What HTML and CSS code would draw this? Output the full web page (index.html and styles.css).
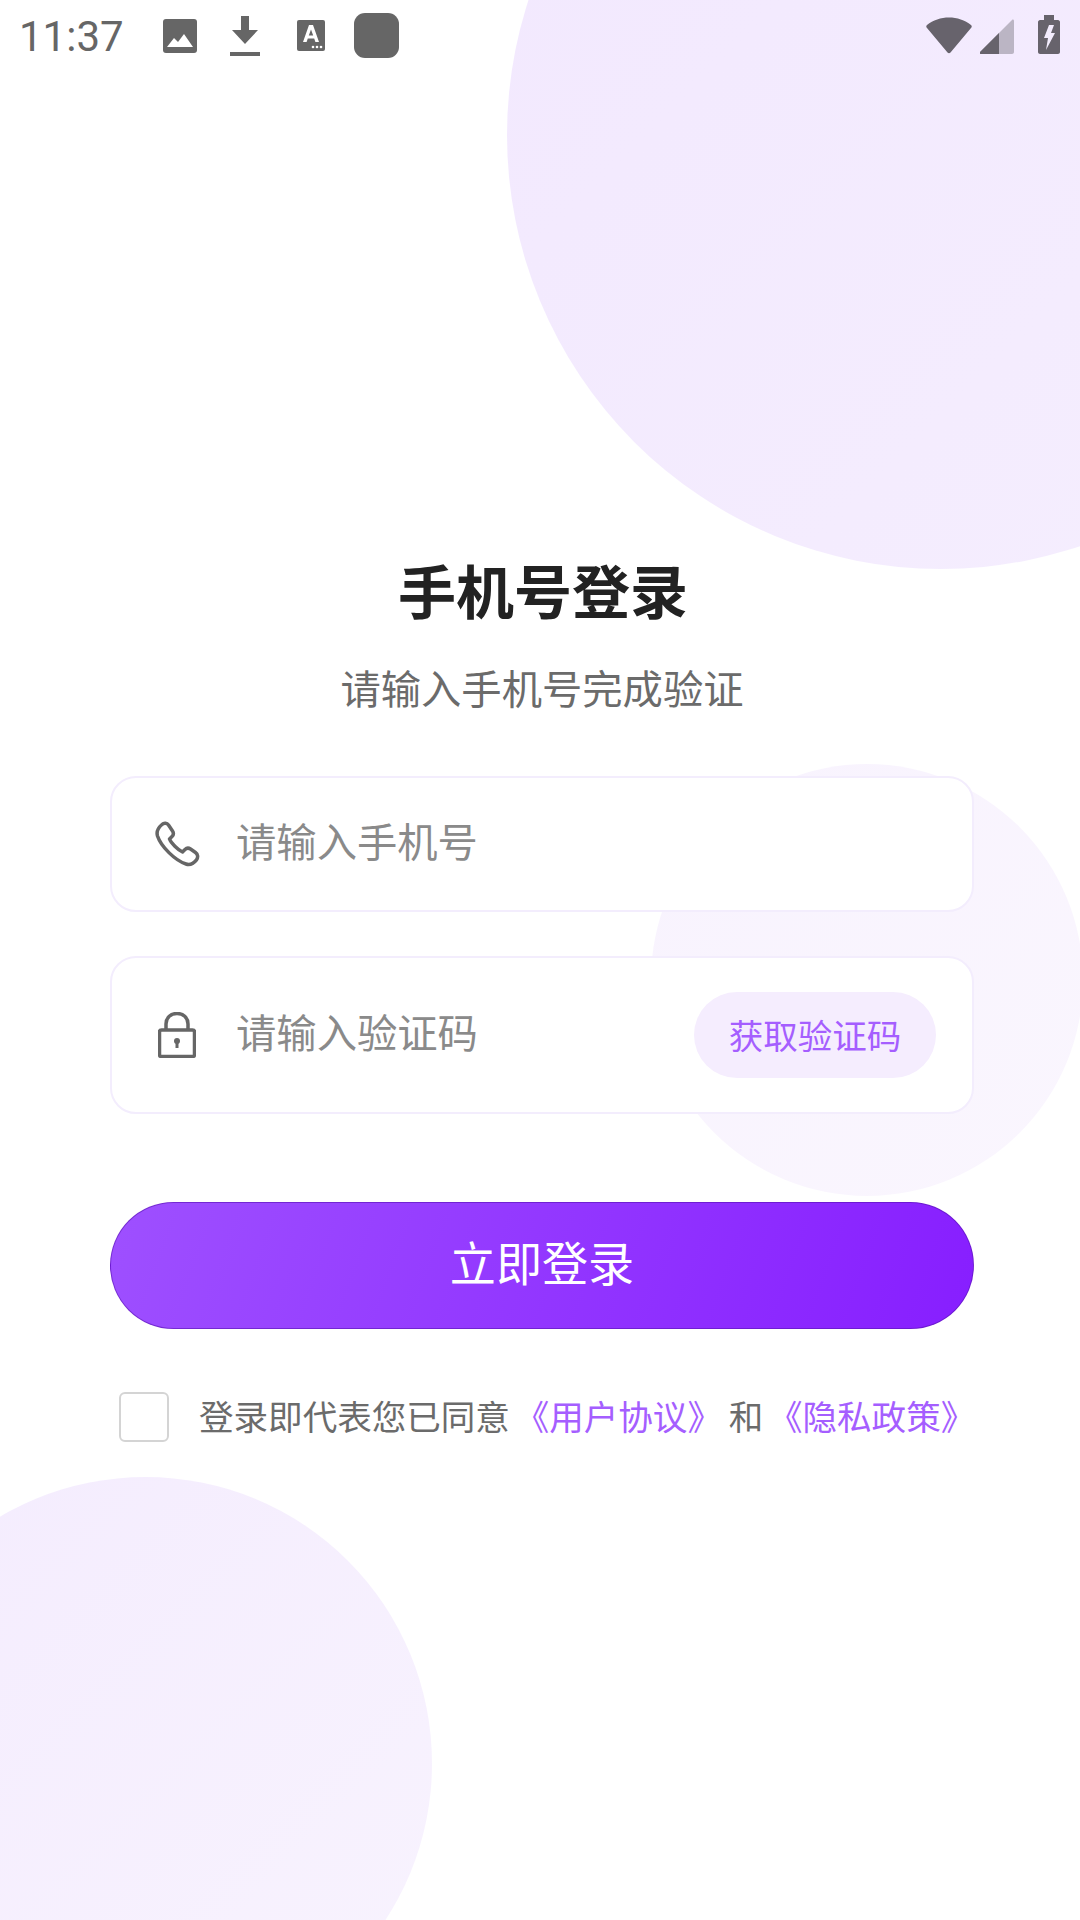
FILE: index.html
```html
<!DOCTYPE html>
<html lang="zh-CN">
<head>
    <meta charset="UTF-8">
    <title>手机号登录</title>
    <link rel="stylesheet" href="styles.css">
</head>
<body>
    <div class="screen">
        <div class="circle circle-top"></div>
        <div class="circle circle-middle"></div>
        <div class="circle circle-bottom"></div>

        <div class="status-bar">
            <div class="status-left">
                <span class="time">11:37</span>
                <svg class="icon-image" viewBox="0 0 34 34"><rect width="34" height="34" rx="3" fill="#666"/><path d="M4 28 L11 19 L15 23 L21 15 L30 28 Z" fill="#fff"/></svg>
                <svg class="icon-download" viewBox="0 0 30 40"><path d="M11 0 H19 V14 H28 L15 28 L2 14 H11 Z" fill="#666"/><rect y="36" width="30" height="4" fill="#666"/></svg>
                <svg class="icon-font" viewBox="0 0 28 32"><rect width="28" height="31" rx="2" fill="#666"/><path d="M12 5 H16 L22 22 H18.400 L17.200 18.600 H10.800 L9.600 22 H6 Z M14 9.400 L11.800 15.600 H16.200 Z" fill="#fff" fill-rule="evenodd"/><circle cx="16" cy="27" r="1.300" fill="#fff"/><circle cx="20" cy="27" r="1.300" fill="#fff"/><circle cx="24" cy="27" r="1.300" fill="#fff"/></svg>
                <div class="app-square"></div>
            </div>
            <div class="status-right">
                <svg class="icon-wifi" viewBox="0 0 46 37"><path d="M1 8 C13 -2 33 -2 45 8 C46 9 46 10 45 11 L24.500 35.500 C23.600 36.600 22.400 36.600 21.500 35.500 L1 11 C0 10 0 9 1 8 Z" fill="#67636c"/></svg>
                <svg class="icon-signal" viewBox="0 0 34 35"><path d="M0 33 L32 1 C33 0 34 1 34 2 V33 C34 34 33 35 32 35 H1 C0 35 -1 34 0 33 Z" fill="#bbb5c4"/><path d="M0 33 L19 14 V35 H1 C0 35 -1 34 0 33 Z" fill="#67636c"/></svg>
                <svg class="icon-battery" viewBox="0 0 22 39"><path d="M6 0 H16 V5 H20 C21 5 22 6 22 7 V37 C22 38 21 39 20 39 H2 C1 39 0 38 0 37 V7 C0 6 1 5 2 5 H6 Z" fill="#67636c"/><path d="M11 10 H16 L13 18 H17 L8 35 L10 23 H6 Z" fill="#f3ecfd"/></svg>
            </div>
        </div>

        <div class="content">
            <h1 class="title">手机号登录</h1>
            <p class="subtitle">请输入手机号完成验证</p>

            <div class="field field-phone">
                <svg class="field-icon" viewBox="0 0 46 46"><path d="M8 3.500 C10 1.500 13 2 14.500 4 L18.500 10 C19.800 12 19.500 14 18 15.500 L15.500 18 C17 22 24 29 28.500 31 L31 28.500 C32.500 27 34.500 26.700 36.500 28 L41.500 31.500 C44 33.200 44.300 36.500 42.500 38.800 C39.500 42.500 36 44.500 32 43 C21 39.500 7 25.500 3.500 15 C2 10 4.500 6.500 8 3.500 Z" fill="none" stroke="#666" stroke-width="3.500" stroke-linejoin="round"/></svg>
                <span class="placeholder">请输入手机号</span>
            </div>

            <div class="field field-code">
                <svg class="field-icon field-icon-lock" viewBox="0 0 38 46"><path d="M8 19 V12 C8 5.500 13 1.500 19 1.500 C25 1.500 30 5.500 30 12 V19" fill="none" stroke="#666" stroke-width="3.500"/><rect x="1.500" y="18" width="35" height="26.500" rx="2" fill="none" stroke="#666" stroke-width="3.500"/><circle cx="19" cy="29" r="3" fill="#666"/><rect x="17.500" y="29" width="3" height="7" fill="#666"/></svg>
                <span class="placeholder">请输入验证码</span>
                <div class="code-btn">获取验证码</div>
            </div>

            <div class="login-btn">立即登录</div>

            <div class="agreement">
                <div class="checkbox"></div>
                <div class="agreement-text">登录即代表您已同意 <a class="link">《用户协议》</a> 和 <a class="link">《隐私政策》</a></div>
            </div>
        </div>
    </div>
</body>
</html>
```

FILE: styles.css
```css
* {
    box-sizing: border-box;
}

body {
    margin: 0;
    background-color: #fff;
    font-family: "Noto Sans CJK SC", "Noto Sans", sans-serif;
}

.screen {
    position: relative;
    width: 1080px;
    height: 1920px;
    overflow: hidden;
    background-color: #fff;
}

.circle {
    position: absolute;
    border-radius: 50%;
}

.circle-top {
    left: 507px;
    top: -299px;
    width: 868px;
    height: 868px;
    background: linear-gradient(135deg, #f2e8fe, #f5eefe);
}

.circle-middle {
    left: 651px;
    top: 764px;
    width: 432px;
    height: 432px;
    background: linear-gradient(135deg, #f8f3fe, #faf6fe);
}

.circle-bottom {
    left: -141px;
    top: 1477px;
    width: 573px;
    height: 573px;
    background: linear-gradient(135deg, #f4ecfe, #f8f3fe);
}

.status-bar {
    position: relative;
    display: flex;
    justify-content: space-between;
    align-items: center;
    height: 70px;
    padding: 2px 20px 0 19px;
}

.status-left {
    display: flex;
    align-items: center;
}

.status-right {
    display: flex;
    align-items: flex-end;
    padding-bottom: 4px;
}

.time {
    width: 144px;
    padding-top: 1px;
    font-family: Roboto, sans-serif;
    font-size: 42px;
    color: #666;
}

.icon-image {
    width: 34px;
    height: 34px;
}

.icon-download {
    width: 30px;
    height: 40px;
    margin-left: 33px;
}

.icon-font {
    width: 28px;
    height: 32px;
    margin-left: 37px;
}

.app-square {
    width: 45px;
    height: 45px;
    margin-left: 29px;
    margin-bottom: 2px;
    border-radius: 11px;
    background-color: #666;
}

.icon-wifi {
    width: 46px;
    height: 37px;
}

.icon-signal {
    width: 34px;
    height: 35px;
    margin-left: 8px;
}

.icon-battery {
    width: 22px;
    height: 39px;
    margin-left: 24px;
}

.content {
    position: relative;
    display: flex;
    flex-direction: column;
    padding: 0 106px 0 110px;
}

.title {
    margin: 478px 0 0;
    padding-left: 2px;
    font-size: 58px;
    line-height: 82px;
    font-weight: 700;
    text-align: center;
    color: #222;
}

.subtitle {
    margin: 28px 0 0;
    font-size: 40.32px;
    line-height: 58px;
    text-align: center;
    color: #6b6b6b;
}

.field {
    display: flex;
    align-items: center;
    padding: 0 36px 0 42px;
    border: 2px solid #f3edfd;
    border-radius: 26px;
    background-color: #fff;
}

.field-phone {
    height: 136px;
    margin-top: 60px;
}

.field-code {
    height: 158px;
    margin-top: 44px;
}

.field-icon {
    width: 46px;
    height: 46px;
    flex-shrink: 0;
}

.field-icon-lock {
    width: 38px;
    margin-left: 4px;
    margin-right: 4px;
}

.placeholder {
    flex: 1;
    margin-left: 36px;
    padding-bottom: 9px;
    font-size: 40.32px;
    color: #8a8a8a;
}

.code-btn {
    display: flex;
    justify-content: center;
    align-items: center;
    width: 242px;
    height: 86px;
    padding-bottom: 2px;
    border-radius: 43px;
    background-color: #f5edfe;
    font-size: 34.56px;
    color: #a55eff;
}

.login-btn {
    display: flex;
    justify-content: center;
    align-items: center;
    height: 127px;
    margin-top: 88px;
    padding-bottom: 9px;
    border: 1px solid rgba(90, 20, 180, 0.6);
    border-radius: 64px;
    background: linear-gradient(110deg, #9e50ff, #871eff);
    font-size: 46.08px;
    color: #fff;
}

.agreement {
    display: flex;
    align-items: center;
    margin-top: 61px;
    padding-left: 9px;
}

.checkbox {
    width: 50px;
    height: 50px;
    border: 2px solid #d4d4d4;
    border-radius: 6px;
    background-color: #fff;
    flex-shrink: 0;
}

.agreement-text {
    margin-left: 30px;
    padding-bottom: 4px;
    font-size: 34.56px;
    word-spacing: -1px;
    white-space: nowrap;
    color: #6b6b6b;
}

.link {
    margin-left: -2px;
    color: #a55eff;
}
```
